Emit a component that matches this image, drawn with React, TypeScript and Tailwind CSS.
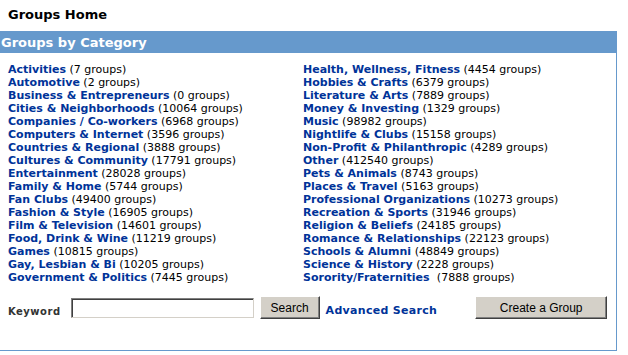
const left: [string, string][] = [
  ["Activities", "7"],
  ["Automotive", "2"],
  ["Business & Entrepreneurs", "0"],
  ["Cities & Neighborhoods", "10064"],
  ["Companies / Co-workers", "6968"],
  ["Computers & Internet", "3596"],
  ["Countries & Regional", "3888"],
  ["Cultures & Community", "17791"],
  ["Entertainment", "28028"],
  ["Family & Home", "5744"],
  ["Fan Clubs", "49400"],
  ["Fashion & Style", "16905"],
  ["Film & Television", "14601"],
  ["Food, Drink & Wine", "11219"],
  ["Games", "10815"],
  ["Gay, Lesbian & Bi", "10205"],
  ["Government & Politics", "7445"],
];

const right: [string, string][] = [
  ["Health, Wellness, Fitness", "4454"],
  ["Hobbies & Crafts", "6379"],
  ["Literature & Arts", "7889"],
  ["Money & Investing", "1329"],
  ["Music", "98982"],
  ["Nightlife & Clubs", "15158"],
  ["Non-Profit & Philanthropic", "4289"],
  ["Other", "412540"],
  ["Pets & Animals", "8743"],
  ["Places & Travel", "5163"],
  ["Professional Organizations", "10273"],
  ["Recreation & Sports", "31946"],
  ["Religion & Beliefs", "24185"],
  ["Romance & Relationships", "22123"],
  ["Schools & Alumni", "48849"],
  ["Science & History", "2228"],
  ["Sorority/Fraternities ", "7888"],
];

function Column({ items }: { items: [string, string][] }) {
  return (
    <ul className="flex flex-col">
      {items.map(([name, count]) => (
        <li key={name} className="h-[13px] leading-[13px] whitespace-pre text-[11px] text-black">
          <a className="font-bold text-[#003399]">{name}</a> ({count} groups)
        </li>
      ))}
    </ul>
  );
}

const btn =
  "h-[23px] bg-[#d4d0c8] border border-t-white border-l-white border-r-[#404040] border-b-[#404040] shadow-[inset_-1px_-1px_0_#808080] text-[12px] text-black font-['Liberation_Sans',Arial,sans-serif]";

export default function App() {
  return (
    <div className="w-[628px] h-[355px] bg-white font-['DejaVu_Sans',Verdana,sans-serif]">
      <div className="h-[31px] pl-[8px] pt-[5px] text-[13px] font-bold text-black">Groups Home</div>
      <div className="w-[617px] h-[320px] border-r border-b border-[#6699cc] flex flex-col">
        <div className="h-[22px] bg-[#6699cc] pl-[1px] leading-[23px] text-[13px] font-bold text-white">
          Groups by Category
        </div>
        <div className="grid grid-cols-[295px_1fr] pl-[8px] pt-[10px]">
          <Column items={left} />
          <Column items={right} />
        </div>
        <div className="flex items-center pl-[8px] mt-[12px]">
          <span className="mt-[7px] text-[10px] font-bold text-[#333] tracking-[0.5px]">Keyword</span>
          <input className="ml-[10px] w-[183px] h-[20px] border border-t-[#808080] border-l-[#808080] border-r-[#d4d0c8] border-b-[#d4d0c8] shadow-[inset_1px_1px_0_#404040] bg-white" />
          <button className={`${btn} ml-[6px] w-[60px]`}>Search</button>
          <a className="ml-[6px] mt-[7px] text-[11px] font-bold text-[#003399] tracking-[0.3px]">Advanced Search</a>
          <button className={`${btn} ml-[38px] w-[132px]`}>Create a Group</button>
        </div>
      </div>
    </div>
  );
}
